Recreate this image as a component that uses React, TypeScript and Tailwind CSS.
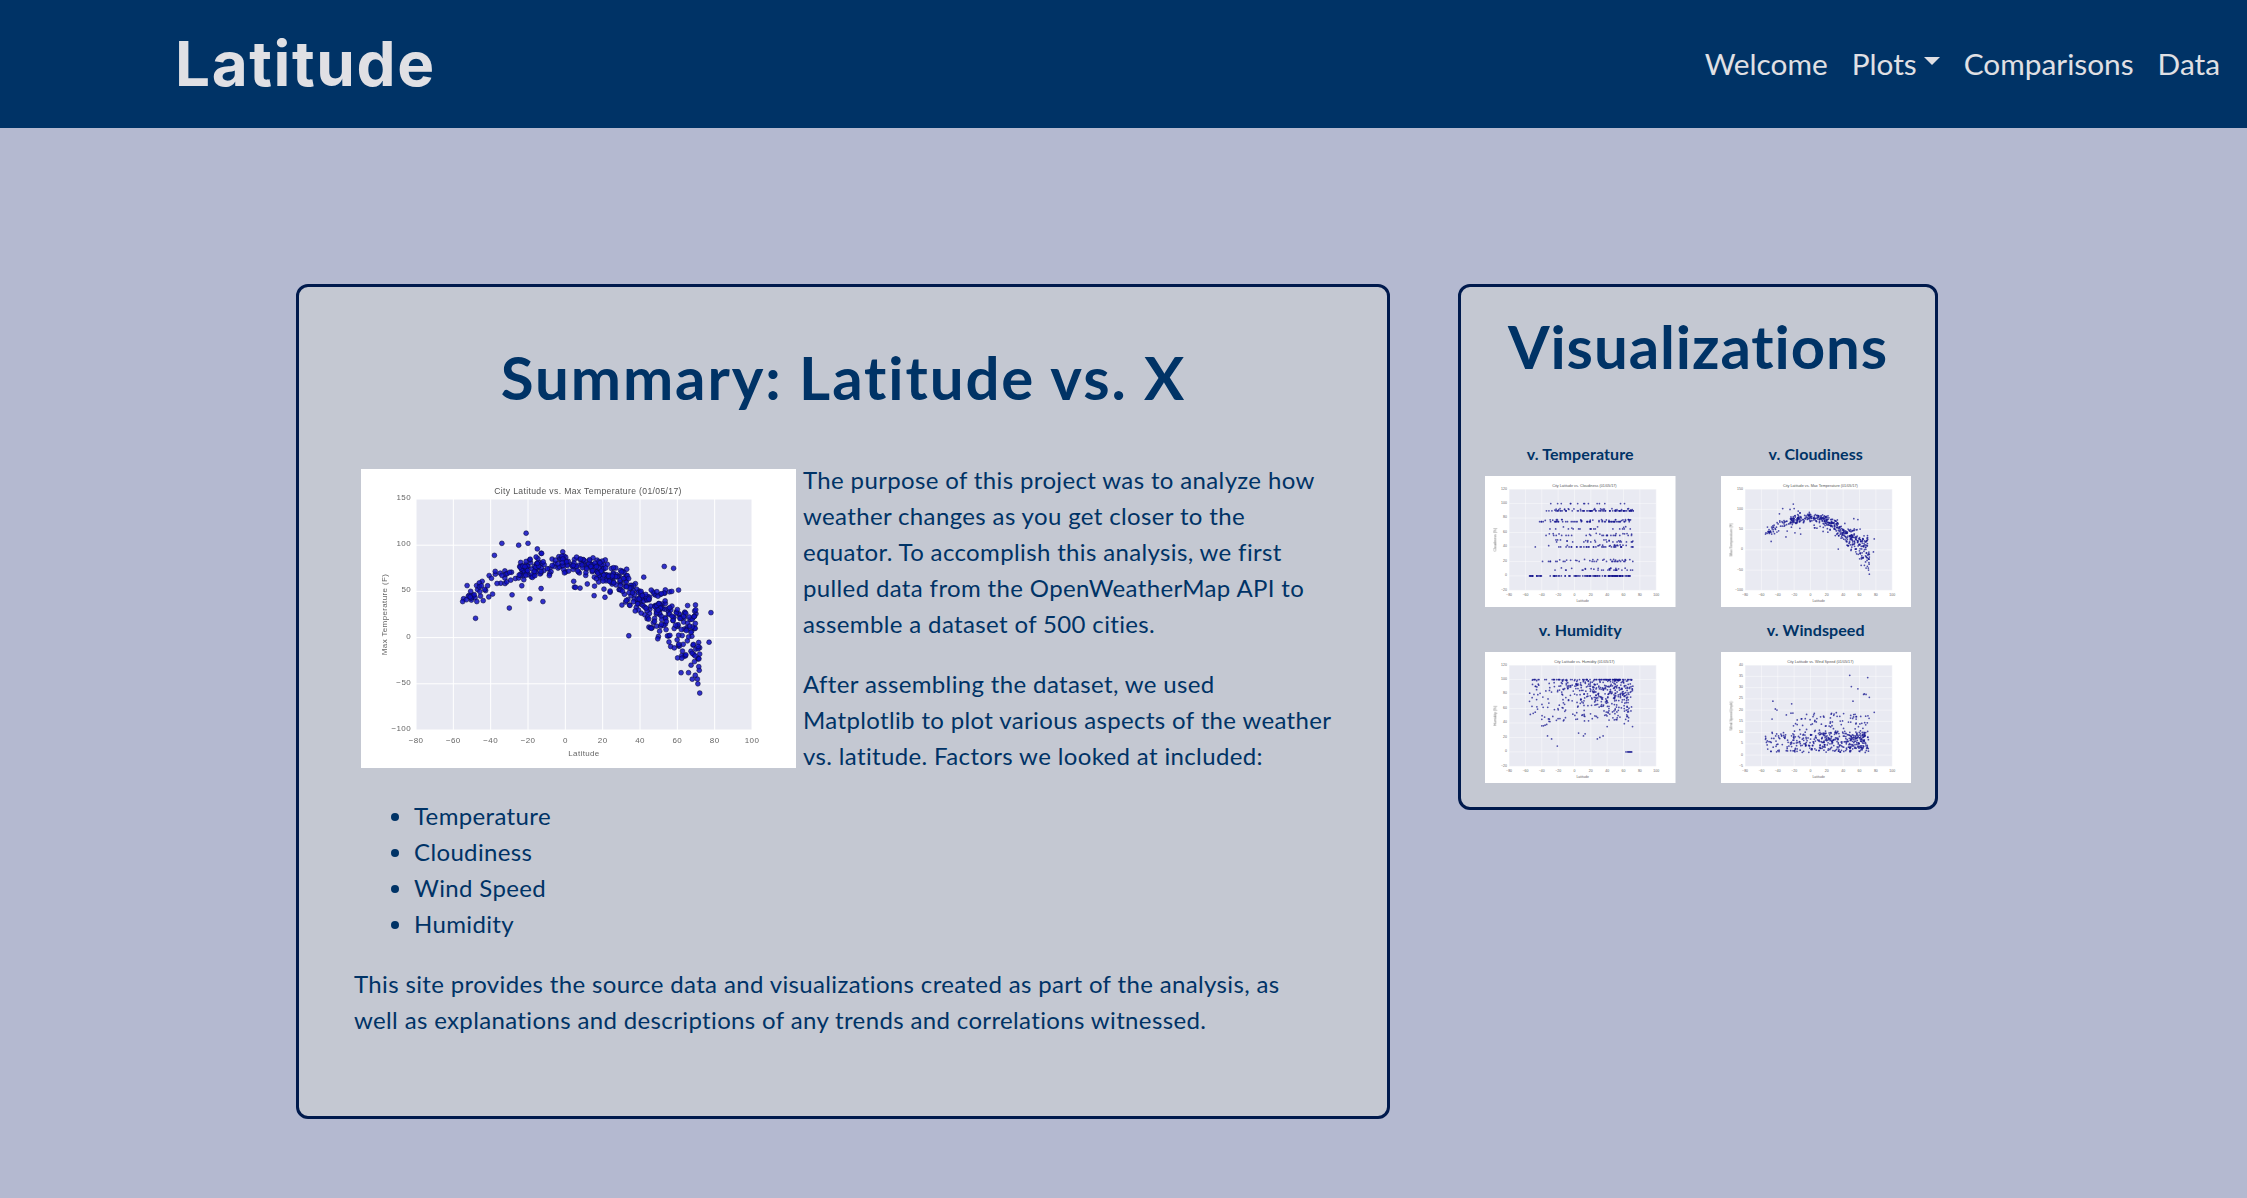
import React from "react";

type Kind = "temp" | "cloud" | "humidity" | "wind";

function rng(seed: number) {
  let a = seed;
  return () => {
    a |= 0;
    a = (a + 0x6d2b79f5) | 0;
    let t = Math.imul(a ^ (a >>> 15), 1 | a);
    t = (t + Math.imul(t ^ (t >>> 7), 61 | t)) ^ t;
    return ((t ^ (t >>> 14)) >>> 0) / 4294967296;
  };
}

function lats(r: () => number, n: number) {
  const out: number[] = [];
  for (let i = 0; i < n; i++) {
    const u = r();
    let x: number;
    if (u < 0.09) x = -55 + r() * 30;
    else if (u < 0.36) x = -25 + r() * 40;
    else if (u < 0.7) x = 15 + r() * 35;
    else x = 48 + r() * 24;
    out.push(x);
  }
  return out;
}

function gauss(r: () => number) {
  return (r() + r() + r() + r() - 2) * 1.7;
}

function lerp(x: number, x0: number, x1: number, y0: number, y1: number) {
  return y0 + ((x - x0) / (x1 - x0)) * (y1 - y0);
}

function tempBase(x: number) {
  if (x < -35) return lerp(x, -55, -35, 40, 68);
  if (x < -15) return lerp(x, -35, -15, 68, 76);
  if (x < 15) return lerp(x, -15, 15, 76, 79);
  if (x < 30) return lerp(x, 15, 30, 79, 60);
  if (x < 45) return lerp(x, 30, 45, 60, 33);
  if (x < 60) return lerp(x, 45, 60, 33, 12);
  return lerp(x, 60, 72, 12, -8);
}

function points(kind: Kind): [number, number][] {
  const r = rng(kind.length * 97 + kind.charCodeAt(0));
  const pts: [number, number][] = [];
  const xs = lats(r, 500);
  for (const x of xs) {
    if (kind === "temp") {
      const sd = x > 62 ? 21 : x > 45 ? 15 : x > 28 ? 10 : 6;
      pts.push([x, tempBase(x) + gauss(r) * sd - (x < 25 && r() < 0.12 ? 18 : 0)]);
    } else if (kind === "cloud") {
      const u = r();
      let y = 0;
      if (x > -40) {
        if (u < 0.2) y = 0;
        else if (u < 0.27) y = 8;
        else if (u < 0.36) y = 20;
        else if (u < 0.47) y = 40;
        else if (u < 0.52) y = 47;
        else if (u < 0.58) y = 56;
        else if (u < 0.63) y = 65;
        else if (u < 0.78) y = 75;
        else if (u < 0.97) y = 90;
        else y = 100;
        if (y !== 0 && y !== 100 && r() < 0.35) y += 1 + r() * 2;
      } else {
        y = u < 0.5 ? 0 : u < 0.8 ? 75 : 40;
      }
      pts.push([x, y]);
    } else if (kind === "humidity") {
      const u = r();
      let y: number;
      if (u < 0.14) y = 100;
      else if (u < 0.58) y = 100 - Math.abs(gauss(r)) * 16;
      else y = 42 + r() * 50;
      pts.push([x, Math.min(100, y)]);
    } else {
      const u = r();
      const y = u < 0.72 ? 1.2 + r() * 9 : 3 + r() * 16;
      pts.push([x, y]);
    }
  }
  if (kind === "temp")
    pts.push([-21, 113], [-34, 102], [-25, 100], [-20, 102], [-15, 96], [53, 77], [58, 75], [-30, 32], [-38, 89], [34, 2], [72, -60], [71, -50], [68, -45], [66, -38], [62, -38], [78, 27], [77, -5], [-55, 39], [-53, 41], [-51, 44], [-46, 55], [-45, 56], [-12, 39], [-19, 42], [57, 50], [-44, 40], [-41, 44]);
  if (kind === "humidity")
    pts.push([63, 0], [65, 0], [66, 0], [67, 0], [68, 0], [69, 0], [70, 0], [-21, 8], [-28, 18], [-33, 22], [28, 18], [31, 20], [35, 22], [5, 26], [11, 22], [13, 25], [-40, 36], [-36, 37], [-34, 38], [-38, 36], [61, 39], [71, 35], [-40, 45], [-30, 42], [40, 35], [-55, 70], [-52, 63], [-48, 55]);
  if (kind === "wind")
    pts.push([48, 35.5], [50, 30.5], [70, 34.5], [58, 29.5], [65, 27], [66, 27.2], [68, 27], [72, 25.7], [-46, 24], [-23, 22.8], [52, 24], [78, 19], [-41, 20], [-43, 20.5], [-55, 7], [-53, 4.5], [-47, 16]);
  return pts;
}

const CONFIG: Record<Kind, { title: string; ylabel: string; ymin: number; ymax: number; ystep: number }> = {
  temp: { title: "City Latitude vs. Max Temperature (01/05/17)", ylabel: "Max Temperature (F)", ymin: -100, ymax: 150, ystep: 50 },
  cloud: { title: "City Latitude vs. Cloudiness (01/05/17)", ylabel: "Cloudiness (%)", ymin: -20, ymax: 120, ystep: 20 },
  humidity: { title: "City Latitude vs. Humidity (01/05/17)", ylabel: "Humidity (%)", ymin: -20, ymax: 120, ystep: 20 },
  wind: { title: "City Latitude vs. Wind Speed (01/05/17)", ylabel: "Wind Speed (mph)", ymin: -5, ymax: 40, ystep: 5 },
};

function Chart({ kind, className, small }: { kind: Kind; className: string; small?: boolean }) {
  const c = CONFIG[kind];
  const L = 55, R = 391, T = 30, B = 261;
  const sx = (x: number) => L + ((x + 80) / 180) * (R - L);
  const sy = (y: number) => B - ((y - c.ymin) / (c.ymax - c.ymin)) * (B - T);
  const xt: number[] = [];
  for (let x = -80; x <= 100; x += 20) xt.push(x);
  const yt: number[] = [];
  for (let y = c.ymin; y <= c.ymax; y += c.ystep) yt.push(y);
  const pts = points(kind);
  return (
    <svg viewBox="0 0 435 299" preserveAspectRatio="none" className={className} fontFamily="Liberation Sans, sans-serif">
      <rect width="435" height="299" fill="#ffffff" />
      <rect x={L} y={T} width={R - L} height={B - T} fill="#e9eaf2" />
      {xt.map((x) => (
        <line key={x} x1={sx(x)} x2={sx(x)} y1={T} y2={B} stroke="#ffffff" strokeWidth="1" />
      ))}
      {yt.map((y) => (
        <line key={y} y1={sy(y)} y2={sy(y)} x1={L} x2={R} stroke="#ffffff" strokeWidth="1" />
      ))}
      <text x="227" y="25" textAnchor="middle" fontSize="8.6" fill="#555">{c.title}</text>
      {xt.map((x) => (
        <text key={x} x={sx(x)} y="274" textAnchor="middle" fontSize="8" fill="#666">{x < 0 ? "\u2212" + -x : x}</text>
      ))}
      {yt.map((y) => (
        <text key={y} x={L - 5} y={sy(y) + 1} textAnchor="end" fontSize="8" fill="#666">{y < 0 ? "\u2212" + -y : y}</text>
      ))}
      <text x={(L + R) / 2} y="287" textAnchor="middle" fontSize="8" fill="#666">Latitude</text>
      <text transform={`translate(26 ${(T + B) / 2}) rotate(-90)`} textAnchor="middle" fontSize="8" fill="#666">{c.ylabel}</text>
      {pts.map(([x, y], i) => (
        <circle
          key={i}
          cx={sx(x)}
          cy={sy(y)}
          r={small ? 2 : 2.4}
          fill={small ? "#16168f" : "#0f0fc4"}
          fillOpacity={small ? 0.75 : 0.85}
          stroke={small ? "none" : "#0a0a40"}
          strokeWidth="0.6"
        />
      ))}
    </svg>
  );
}

function Thumb({ label, kind }: { label: string; kind: Kind }) {
  return (
    <div className="flex flex-col items-center">
      <div className="text-[16px] leading-6 font-bold tracking-[0.1px] mb-[10px]">{label}</div>
      <Chart kind={kind} small className="block w-full h-[131px] blur-[0.5px]" />
    </div>
  );
}

export default function App() {
  return (
    <div className="min-h-[1198px] bg-[#b4b9d0] text-[#003366] font-['Lato','Noto_Sans',sans-serif]">
      <header className="h-[128px] bg-[#003366] flex items-center justify-between pl-[175px] pr-[15px]">
        <a className="font-['Inter',sans-serif] font-bold text-[62px] leading-none tracking-[1.6px] text-[#e0e0e4]">Latitude</a>
        <nav className="flex items-center text-[29.8px] text-[#e0e0e4]">
          <a className="px-3">Welcome</a>
          <a className="px-3 flex items-center">
            Plots
            <span className="ml-[7px] mb-[6px] w-0 h-0 border-x-[8.5px] border-x-transparent border-t-[8.5px] border-t-[#e0e0e4]" />
          </a>
          <a className="px-3">Comparisons</a>
          <a className="px-3">Data</a>
        </nav>
      </header>
      <main className="flex items-start gap-[68px] pt-[156px] pl-[296px]">
        <section className="w-[1094px] h-[835px] bg-[#c4c8d2] border-[3px] border-[#001a4d] rounded-[12px] pl-[55px] pr-[54px] pt-[54px]">
          <h1 className="text-[60px] leading-[72px] font-bold tracking-[1.9px] text-center mb-[49px]">Summary: Latitude vs. X</h1>
          <div className="text-[24px] leading-9 tracking-[0.36px]">
            <Chart kind="temp" className="float-left m-[7px] w-[435px] h-[299px] blur-[0.4px]" />
            <p className="mb-6">
              The purpose of this project was to analyze how<br />
              weather changes as you get closer to the<br />
              equator. To accomplish this analysis, we first<br />
              pulled data from the OpenWeatherMap API to<br />
              assemble a dataset of 500 cities.
            </p>
            <p className="mb-6">
              After assembling the dataset, we used<br />
              Matplotlib to plot various aspects of the weather<br />
              vs. latitude. Factors we looked at included:
            </p>
            <ul className="list-disc pl-[60px] mb-6 clear-left">
              <li>Temperature</li>
              <li>Cloudiness</li>
              <li>Wind Speed</li>
              <li>Humidity</li>
            </ul>
            <p>
              This site provides the source data and visualizations created as part of the analysis, as<br />
              well as explanations and descriptions of any trends and correlations witnessed.
            </p>
          </div>
        </section>
        <aside className="w-[480px] bg-[#c4c8d2] border-[3px] border-[#001a4d] rounded-[12px] px-6 pt-[23px] pb-6">
          <h2 className="text-[60px] leading-[72px] font-bold tracking-[0.9px] text-center mb-[60px]">Visualizations</h2>
          <div className="grid grid-cols-2 gap-x-[45px] gap-y-[11px]">
            <Thumb label="v. Temperature" kind="cloud" />
            <Thumb label="v. Cloudiness" kind="temp" />
            <Thumb label="v. Humidity" kind="humidity" />
            <Thumb label="v. Windspeed" kind="wind" />
          </div>
        </aside>
      </main>
    </div>
  );
}
